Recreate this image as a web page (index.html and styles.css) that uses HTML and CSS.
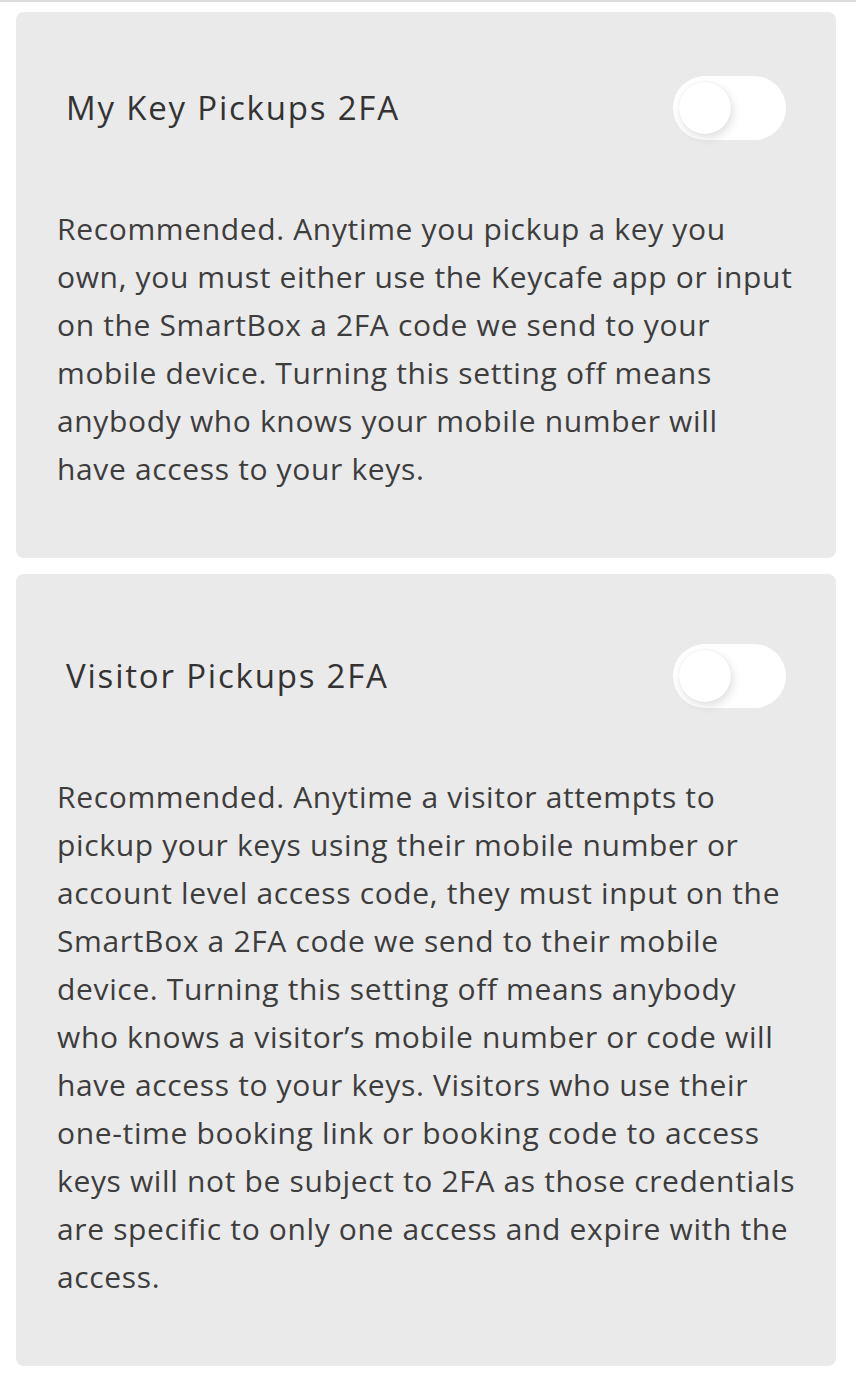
FILE: index.html
```html
<!DOCTYPE html>
<html>
<head>
<meta charset="utf-8">
<link rel="stylesheet" href="styles.css">
</head>
<body>
<div class="topline"></div>
<main class="list">
  <section class="card">
    <div class="card-head">
      <h2 class="card-title">My Key Pickups 2FA</h2>
      <span class="toggle"><span class="knob"></span></span>
    </div>
    <p class="card-text">Recommended. Anytime you pickup a key you<br>own, you must either use the Keycafe app or input<br>on the SmartBox a 2FA code we send to your<br>mobile device. Turning this setting off means<br>anybody who knows your mobile number will<br>have access to your keys.</p>
  </section>
  <section class="card card-second">
    <div class="card-head">
      <h2 class="card-title">Visitor Pickups 2FA</h2>
      <span class="toggle"><span class="knob"></span></span>
    </div>
    <p class="card-text">Recommended. Anytime a visitor attempts to<br>pickup your keys using their mobile number or<br>account level access code, they must input on the<br>SmartBox a 2FA code we send to their mobile<br>device. Turning this setting off means anybody<br>who knows a visitor’s mobile number or code will<br>have access to your keys. Visitors who use their<br>one-time booking link or booking code to access<br>keys will not be subject to 2FA as those credentials<br>are specific to only one access and expire with the<br>access.</p>
  </section>
</main>
</body>
</html>
```

FILE: styles.css
```css
* { box-sizing: border-box; }
html, body { margin: 0; padding: 0; background: #ffffff; }
body { font-family: "Open Sans", "Lato", sans-serif; color: #3a3a3a; font-variant-ligatures: none; }
.topline { height: 2px; background: #dddddd; }
.list { display: flex; flex-direction: column; gap: 16px; padding: 10px 20px 0 16px; }
.card { background: #eaeaea; border-radius: 8px; padding: 64px 20px 65px 41px; }
.card-second { padding-top: 70px; }
.card-head { display: flex; align-items: center; justify-content: space-between; padding-left: 9px; padding-right: 30px; }
.card-title { margin: 0; font-size: 33px; line-height: 40px; font-weight: 400; color: #333; letter-spacing: 1.8px; }
.toggle { width: 113px; height: 64px; border-radius: 32px; background: #ffffff; display: flex; align-items: center; padding-left: 6px; }
.knob { width: 52px; height: 52px; border-radius: 50%; background: #fff; box-shadow: 0 0 2px rgba(0,0,0,0.08), 2px 4px 10px rgba(0,0,0,0.12); }
.card-text { margin: 65px 0 0 0; font-size: 30px; line-height: 48px; color: #3d3d3d; letter-spacing: 0.65px; white-space: nowrap; }
```
